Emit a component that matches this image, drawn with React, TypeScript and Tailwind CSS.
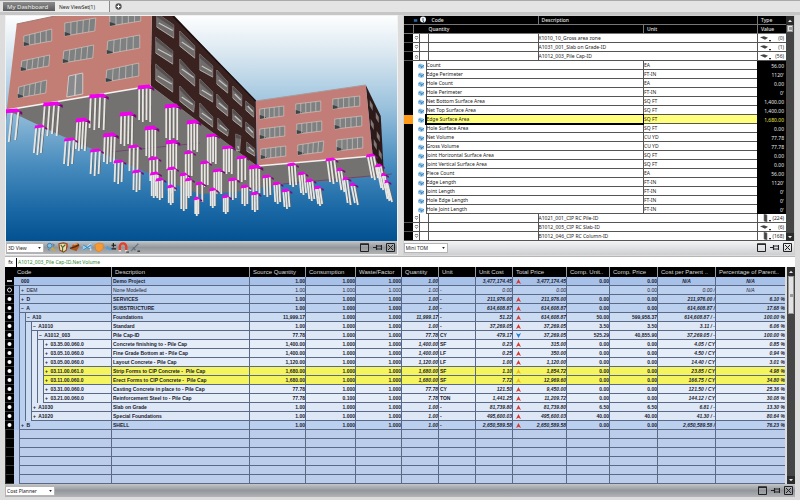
import { useState } from 'react';
import type { ReactNode } from 'react';
import clsx from 'clsx';

type Quad = [number, number, number, number, number, number, number, number];

// top-left, top-right, bottom-right, bottom-left
const FRONT_WINDOWS: Quad[] = [
    [24, 36, 52, 29, 52, 41, 24, 46],
    [65, 23, 96, 18, 95, 31, 65, 36],
    [110, 13, 141, 9, 141, 21, 110, 26],
    [22, 61, 50, 55, 49, 66, 21, 71],
    [64, 51, 94, 45, 93, 58, 63, 63],
    [108, 41, 140, 35, 140, 48, 107, 54],
    [19, 87, 47, 80, 46, 93, 18, 98],
    [107, 70, 139, 63, 139, 76, 106, 82],
    [260, 109, 284, 106, 284, 116, 260, 119],
    [296, 104, 321, 101, 321, 111, 296, 114],
    [333, 99, 360, 96, 360, 106, 333, 109],
    [260, 129, 285, 126, 285, 136, 260, 139],
    [297, 124, 322, 121, 322, 131, 297, 134],
    [335, 119, 362, 116, 362, 126, 335, 129],
    [261, 149, 286, 146, 286, 156, 261, 159],
    [298, 145, 324, 141, 323, 152, 298, 155],
    [337, 140, 363, 137, 363, 148, 337, 151],
];

const SIDE_WINDOWS: Quad[] = [
    [157, 13, 174, 25, 174, 38, 157, 27],
    [156, 37, 173, 51, 173, 64, 156, 53],
    [156, 64, 173, 79, 173, 92, 156, 80],
    [180, 31, 195, 46, 195, 58, 180, 46],
    [180, 59, 195, 75, 195, 86, 180, 73],
    [180, 86, 195, 102, 194, 112, 180, 101],
    [200, 54, 213, 66, 213, 77, 200, 70],
    [200, 79, 213, 92, 213, 102, 200, 94],
    [200, 103, 213, 117, 213, 127, 200, 117],
    [217, 70, 228, 82, 228, 93, 217, 84],
    [217, 94, 228, 106, 228, 116, 217, 107],
    [218, 118, 229, 130, 228, 136, 218, 129],
    [233, 86, 242, 95, 242, 106, 233, 98],
    [233, 109, 242, 118, 242, 127, 233, 120],
    [236, 134, 241, 136, 240, 151, 236, 150],
    [246, 101, 254, 108, 254, 117, 246, 110],
    [246, 122, 254, 129, 254, 138, 246, 131],
    [247, 142, 255, 149, 255, 156, 247, 151],
];

// centre x, top, cap width, pile length, pile count
const PILES: number[][] = [
    [12, 109, 17, 32, 3], [52, 102, 18, 33, 4], [98, 94, 18, 35, 4], [145, 85, 15, 36, 4],
    [40, 125, 11, 30, 3], [82, 118, 13, 32, 4], [127, 112, 15, 33, 4], [172, 104, 15, 35, 4],
    [70, 138, 12, 28, 3], [110, 133, 14, 30, 4], [151, 126, 13, 31, 4], [193, 120, 13, 31, 4],
    [96, 149, 12, 27, 3], [134, 145, 12, 28, 3], [172, 140, 13, 30, 4], [212, 134, 12, 30, 4],
    [119, 160, 11, 24, 3], [154, 157, 11, 26, 3], [189, 151, 10, 27, 3], [228, 146, 12, 28, 4],
    [137, 170, 10, 22, 3], [155, 172, 10, 26, 4], [172, 167, 10, 26, 3], [205, 161, 10, 26, 3],
    [242, 156, 11, 26, 3], [255, 165, 13, 27, 4], [218, 169, 11, 25, 4], [184, 173, 9, 38, 3],
    [233, 178, 10, 22, 3], [160, 178, 9, 22, 3], [171, 185, 8, 20, 3], [245, 185, 9, 21, 3],
    [200, 182, 9, 20, 2], [255, 192, 9, 20, 3], [213, 188, 8, 20, 3], [226, 195, 8, 19, 3],
    [189, 178, 8, 20, 3], [197, 197, 7, 19, 3], [267, 175, 10, 22, 3], [277, 182, 9, 22, 3],
    [286, 189, 9, 20, 3], [292, 163, 10, 24, 3], [302, 172, 9, 23, 3], [310, 179, 9, 22, 3],
    [318, 186, 8, 20, 3], [331, 158, 11, 26, 3], [340, 168, 7, 24, 2], [346, 177, 7, 28, 2],
    [353, 183, 7, 22, 2], [371, 154, 10, 26, 3], [379, 164, 8, 26, 3], [384, 173, 6, 28, 2],
    [387, 180, 5, 22, 2],
];

const points = (q: number[]) => q.join(' ');

const FrontWindow = ({ q }: { q: Quad }) => {
    const [x1, y1, x2, y2, x3, y3, x4, y4] = q;
    const panes = [0.2, 0.4, 0.6, 0.8];
    return (
        <g stroke="#c9bdb8" strokeWidth="0.8">
            <polygon points={points(q)} fill="#7d8181" />
            <path d={`M${x4} ${y4 - 4}L${x4 + 6} ${y4 - 2}V${y4 - 1}L${x4} ${y4}Z`} fill="#3c4446" stroke="none" />
            {panes.map(t => (
                <line key={t} x1={x1 + (x2 - x1) * t} y1={y1 + (y2 - y1) * t} x2={x4 + (x3 - x4) * t} y2={y4 + (y3 - y4) * t} />
            ))}
        </g>
    );
};

const SideWindow = ({ q }: { q: Quad }) => {
    const [x1, y1, x2, y2, x3, y3, x4, y4] = q;
    return (
        <g>
            <polygon points={points(q)} fill="#6f6c6b" stroke="#a39c98" strokeWidth="0.6" />
            <path d={`M${x1} ${y1}L${x2} ${y2}V${y2 + 3}L${x1} ${y1 + 4}Z`} fill="#55504f" />
            <line x1={x4 + 2} y1={y4 - 4} x2={x3 - 1} y2={(y3 + y4) / 2 - 2} stroke="#c6c4c2" strokeWidth="1.2" />
            <line x1={x4} y1={y4} x2={x3} y2={y3} stroke="#b5aeaa" strokeWidth="0.8" />
        </g>
    );
};

const Pile = ({ pile }: { pile: number[] }) => {
    const [cx, top, w, len, count] = pile;
    const lean = cx < 150 ? (cx - 150) * 0.022 : Math.max(0, cx - 250) * 0.035;
    const h = w > 12 ? 3 : 2;
    const step = (w - 4) / (count - 1);
    return (
        <g>
            <path d={`M${cx + w / 2 - 5} ${top}L${cx + w / 2 + 2} ${top + 3}V${top + h + 3}L${cx + w / 2 - 3} ${top + h}Z`} fill="#7a0878" />
            {Array.from({ length: count }, (_, i) => {
                const x = cx - w / 2 + 2 + i * step;
                const y = top + h + (i % 2);
                const end = top + h + len - 4 + (i % 2 ? 2 : 0);
                return (
                    <g key={i}>
                        <line x1={x + 1.2} y1={y} x2={x + 1.2 + lean} y2={end} stroke="#68645f" strokeWidth="0.9" />
                        <line x1={x} y1={y} x2={x + lean} y2={end} stroke="#e9e7e3" strokeWidth="1.8" />
                    </g>
                );
            })}
            <polygon
                points={points([cx - w / 2 + 1, top + 0.5, cx + w / 2 - 3, top - 0.5, cx + w / 2, top + h, cx - w / 2, top + h + 1.5])}
                fill="#f000ec"
            />
        </g>
    );
};

const BuildingScene = () => (
    <svg className="block w-full flex-1" viewBox="6 16 391 225" preserveAspectRatio="xMidYMid slice" role="img" aria-label="3D model view">
        <defs>
            <linearGradient id="sky" x1="0" y1="0" x2="0" y2="1">
                <stop offset="0" stopColor="#fdfefe" />
                <stop offset="0.16" stopColor="#dbe8f1" />
                <stop offset="0.4" stopColor="#9bc2dd" />
                <stop offset="0.65" stopColor="#4b8ebf" />
                <stop offset="0.85" stopColor="#1b69a6" />
                <stop offset="1" stopColor="#02508f" />
            </linearGradient>
        </defs>
        <rect x="-400" y="16" width="1200" height="226" fill="url(#sky)" />
        <polygon points="7,110 151,85 258,166 373,155 388,175 330,181 283,184 235,192 200,194 160,178 60,135" fill="#747270" />
        <path d="M110 152L200 143M283 184L392 174" stroke="#6c3b70" strokeWidth="0.8" />
        <polygon points="366,85 381,116 384,172 373,156" fill="#2c1a1a" />
        <g fill="#7e7876">
            <path d="M370 100l3 5v6l-3-5zM376 112l3 5v6l-3-5zM371 119l3 5v6l-3-5zM377 131l3 5v6l-3-5zM374 139l3 5v6l-3-5zM379 149l3 5v6l-3-5z" />
        </g>
        <polygon points="256,101 366,85 373,156 258,166" fill="#c27d78" />
        <path d="M256 101L366 85" stroke="#a79c9b" strokeWidth="1" />
        <path d="M258 166L373 156" stroke="#f3f1ee" strokeWidth="1.4" />
        <polygon points="152,10 169,10 256,101 257,166 151,86" fill="#3a2220" />
        <path d="M173 16L256 101" stroke="#1a1010" strokeWidth="1.4" />
        <path d="M151 86L257 166" stroke="#8c8784" strokeWidth="0.8" />
        <polygon points="17,24 60,15 152,10 151,86 7,110" fill="#c27d75" />
        <path d="M17 24L60 15" stroke="#a27a75" />
        <path d="M7 110L151 86" stroke="#f6f4f1" strokeWidth="1.6" />
        {FRONT_WINDOWS.map(q => <FrontWindow key={q.join()} q={q} />)}
        <path d="M69 76L83 73V94L67 97Z" fill="#878a8c" stroke="#d2c8c4" />
        <path d="M76 75L75 96" stroke="#d2c8c4" strokeWidth="1.4" />
        {SIDE_WINDOWS.map(q => <SideWindow key={q.join()} q={q} />)}
        {PILES.map(p => <Pile key={p.join()} pile={p} />)}
    </svg>
);

const ArrowDot = ({ up }: { up?: boolean }) => (
    <svg viewBox="0 0 6 6" className="size-1 shrink-0">
        <path d={up ? 'M0 4.5L3 1l3 3.5z' : 'M0 1.5L3 5l3-3.5z'} fill="#e8e8e8" />
    </svg>
);

const Scrollbar = ({ long }: { long?: boolean }) => (
    <div aria-hidden="true" className="flex w-[8px] shrink-0 flex-col items-center bg-[#454545]">
        <div className="flex h-[9px] w-full items-center justify-center bg-[#2b2b2b]"><ArrowDot up /></div>
        <div className={clsx('flex w-[6px] items-center justify-center border border-[#999] bg-[#e2e2e2]', long ? 'h-[38px]' : 'h-[7px]')}>
            <span className="h-[3px] w-[3px] bg-[#9a9a9a]" />
        </div>
        <div className="flex-1" />
        <div className="flex h-[8px] w-full items-center justify-center bg-[#2b2b2b]"><ArrowDot /></div>
    </div>
);

const WindowButtons = () => (
    <div className="ml-auto flex items-center gap-[4px] pr-[2px]">
        <button aria-label="Maximize">
            <svg viewBox="0 0 9 9" className="block size-[9px]"><path d="M.5 1h8v7.500h-8z" fill="none" stroke="#222" /><path d="M0 1.200h9" stroke="#222" strokeWidth="1.400" /></svg>
        </button>
        <button aria-label="Pin">
            <svg viewBox="0 0 9 9" className="block size-[9px]"><path d="M0 4.500h3M3.500 2v5M8.500 2v5" stroke="#222" /><path d="M3.500 3h5v3h-5z" fill="none" stroke="#222" strokeWidth="1.200" /></svg>
        </button>
        <button aria-label="Close">
            <svg viewBox="0 0 9 9" className="block size-[9px]"><path d="M.5.5h8v8h-8zM2 2l5 5M7 2L2 7" fill="none" stroke="#222" /></svg>
        </button>
    </div>
);

const ViewSelect = ({ label, width, light, children }: { label: string; width: string; light?: boolean; children?: ReactNode }) => (
    <div className={clsx('flex h-[13px] shrink-0 items-center', light ? 'bg-linear-to-b from-[#f4f5f6] to-[#cfd1d4]' : 'bg-linear-to-b from-[#c4c6c8] via-[#93979b] to-[#b2b4b6]')}>
        <div className={clsx('relative flex h-[10px] items-center border border-[#b5b5b5] bg-white', width)}>
            <select aria-label="Panel view" className="h-full w-full appearance-none bg-transparent pl-px text-[5px] leading-[8px] text-[#222] outline-none">
                <option>{label}</option>
            </select>
            <svg viewBox="0 0 4 3" className="pointer-events-none absolute right-[2px] h-[2px] w-[3px]"><path d="M0 0h4L2 3z" fill="#222" /></svg>
        </div>
        {children}
        <WindowButtons />
    </div>
);

const TOOL_ICONS: { name: string; art: ReactNode }[] = [
    { name: 'Zoom', art: <><circle cx="4" cy="4" r="2.600" fill="#7fc0ea" stroke="#3a77ad" /><path d="M6 6l4 4" stroke="#c7a93e" strokeWidth="2" /><path d="M7 2l2 1-1 2M2 8l2 1" stroke="#3f78a5" fill="none" /></> },
    { name: 'Shade', art: <><path d="M1 2l5-1 4 1-1 7-3 2-4-2z" fill="#f5d9a6" stroke="#8b4a22" strokeWidth="1.200" /><path d="M3 3l2 3 3-3M5 6v4" stroke="#3c6a33" strokeWidth="1.200" fill="none" /><path d="M8 2l2 1v3" stroke="#d23c2a" fill="none" /></> },
    { name: 'Orbit', art: <><path d="M1 8l2-5 6-2 1 4-3 5z" fill="#b1561d" /><path d="M0 7l6-2 4-2" stroke="#4d2a17" strokeWidth="1.600" fill="none" /><path d="M4 3l4-1" stroke="#eb9a4e" strokeWidth="1.400" /></> },
    { name: 'Section', art: <><path d="M1 3l4 3-4 3M10 2L6 5l4 4" fill="#8fd0f4" stroke="#dff3fd" strokeWidth="1.600" /><path d="M1 3l8 5M1 9l9-6" stroke="#3d8fc7" strokeWidth="1.200" /></> },
    { name: 'Select', art: <path d="M1 3l4-2 5 1v5l-4 4-4-2z" fill="#f79a35" stroke="#d77a1c" strokeWidth="0.600" /> },
    { name: 'Offset', art: <><path d="M0 7h6M1 5l4 4" stroke="#4aa2da" strokeWidth="1.600" /><path d="M8 1v5M6 3.500h5M6 7.500h5" stroke="#1b1b1b" strokeWidth="1.200" /></> },
    { name: 'Snap', art: <><path d="M2 9V5a3.500 3.500 0 017 0v4" fill="none" stroke="#e6402a" strokeWidth="2.600" /><path d="M.700 9.500h2.600M7.700 9.500h2.600" stroke="#f2d5cd" strokeWidth="1.600" /><path d="M9 11h3" stroke="#222" /></> },
    { name: 'Measure', art: <><path d="M1 10l8-8M3 6l3 3" stroke="#5c6f80" strokeWidth="1.200" /><path d="M1 8l2 2M8 1l2 2" stroke="#7696b0" /><path d="M8 10h3" stroke="#222" strokeWidth="1.200" /></> },
];

type Takeoff = { name: string; unit?: string; value: string; kind: 'down' | 'up' | 'item'; tall?: boolean };

const item = (name: string, unit: string, value: string): Takeoff => ({ name, unit, value, kind: 'item' });

const TAKEOFFS: Takeoff[] = [
    { name: 'X1010_10_Gross area zone', value: '(0)', kind: 'down' },
    { name: 'A1031_001_Slab on Grade-ID', value: '(1)', kind: 'down' },
    { name: 'A1012_003_Pile Cap-ID', value: '(56)', kind: 'up' },
    item('Count', 'EA', '56.00'),
    item('Edge Perimeter', 'FT-IN', "1120'"),
    item('Hole Count', 'EA', '0.00'),
    item('Hole Perimeter', 'FT-IN', "0'"),
    item('Net Bottom Surface Area', 'SQ FT', '1,400.00'),
    item('Net Top Surface Area', 'SQ FT', '1,400.00'),
    item('Edge Surface Area', 'SQ FT', '1,680.00'),
    item('Hole Surface Area', 'SQ FT', '0.00'),
    item('Net Volume', 'CU YD', '77.78'),
    item('Gross Volume', 'CU YD', '77.78'),
    item('Joint Horizontal Surface Area', 'SQ FT', '0.00'),
    item('Joint Vertical Surface Area', 'SQ FT', '0.00'),
    item('Piece Count', 'EA', '56.00'),
    item('Edge Length', 'FT-IN', "1120'"),
    item('Joint Length', 'FT-IN', "0'"),
    item('Hole Edge Length', 'FT-IN', "0'"),
    item('Hole Joint Length', 'FT-IN', "0'"),
    { name: 'A1021_001_CIP RC Pile-ID', value: '(224)', kind: 'down', tall: true },
    { name: 'B1012_005_CIP RC Slab-ID', value: '(6)', kind: 'down' },
    { name: 'B1012_046_CIP RC Column-ID', value: '(168)', kind: 'down', tall: true },
];

const TypeIcon = ({ tall }: { tall?: boolean }) => (
    <svg viewBox="0 0 12 8" className="h-[8px] w-[12px]">
        {tall ? (
            <path d="M4 0l3 1v7l-3-1z" fill="#444" stroke="#777" strokeWidth="0.600" />
        ) : (
            <path d="M0 3.200l4-1 4 1.500-3 2z" fill="#444" />
        )}
        <path d="M9 6h2v1.200H9z" fill="#333" />
    </svg>
);

const TakeoffTable = ({ selected, onSelect }: { selected: string; onSelect: (name: string) => void }) => (
    <table className="min-w-0 flex-1 table-fixed border-separate border-spacing-0 bg-white text-left text-[5px] leading-[8px] whitespace-nowrap text-[#222]">
        <colgroup>
            <col className="w-[9px]" /><col className="w-[6px]" /><col className="w-[7px]" /><col className="w-[3px]" />
            <col className="w-[109px]" /><col /><col className="w-[114px]" /><col className="w-[29px]" />
        </colgroup>
        <thead className="bg-black text-[#e4e4e4]">
            <tr className="h-[9px] *:border-b *:border-[#777] *:p-0 *:font-medium">
                <th />
                <th><svg viewBox="0 0 7 7" className="h-[7px] w-[6px]"><path d="M1 2h4v3H1z" fill="#2a6aa8" /></svg></th>
                <th colSpan={2}><svg viewBox="0 0 8 8" className="block h-[8px] w-[8px]"><circle cx="4" cy="3.500" r="3" fill="#eef2f6" /><path d="M4 2v3l2 2" stroke="#3f5064" fill="none" /></svg></th>
                <th><span className="pl-[3px]">Code</span></th>
                <th colSpan={2} className="border-l"><span className="pl-[3px]">Description</span></th>
                <th className="border-l"><span className="pl-[3px]">Type</span></th>
            </tr>
            <tr className="h-[9px] *:border-b *:border-[#777] *:p-0 *:font-medium">
                <th /><th colSpan={2} className="border-l" />
                <th colSpan={3}><span className="pl-[3px]">Quantity</span></th>
                <th className="border-l"><span className="pl-[3px]">Unit</span></th>
                <th className="border-l"><span className="pl-[3px]">Value</span></th>
            </tr>
        </thead>
        <tbody>
            {TAKEOFFS.map(t => {
                if (t.kind !== 'item') {
                    return (
                        <tr key={t.name} className="h-[9px] *:border-b *:border-[#555] *:p-0">
                            <td className="bg-black" />
                            <td><svg viewBox="0 0 6 8" className="block h-[8px] w-[6px]"><path d={t.kind === 'up' ? 'M2 5l1.500-2L5 5M2 6h3' : 'M2 3.500l1.500 2 1.500-2M2 2.500h3'} stroke="#555" strokeWidth="0.700" fill="none" /></svg></td>
                            <td colSpan={2} className="border-x" />
                            <td />
                            <td colSpan={2} className="border-l">{t.name}</td>
                            <td className="border-l">
                                <div className="flex items-center justify-between pr-[2px] pl-[2px]"><TypeIcon tall={t.tall} />{t.value}</div>
                            </td>
                        </tr>
                    );
                }
                const active = t.name === selected;
                return (
                    <tr key={t.name} className="h-[9px] *:p-0" onClick={() => onSelect(t.name)}>
                        <td className={active ? 'bg-[#ff9a16]' : 'bg-black'} />
                        <td colSpan={2}>
                            <svg viewBox="0 0 13 8" className="block h-[8px] w-[13px]"><path d="M5 3l2-1.500L11 3v3L8 7 5 5.500z" fill="#8cc0e6" /><path d="M6 3l3 2M8 6l3-3" stroke="#3b7cb3" strokeWidth="0.800" /></svg>
                        </td>
                        <td colSpan={3} className={clsx('border-b border-l', active ? 'border-black bg-[#ffff7c] outline outline-black' : 'border-[#555]')}>{t.name}</td>
                        <td className={clsx('border-b border-l border-[#555]', active && 'bg-[#ffff7c]')}>{t.unit}</td>
                        <td className={clsx('bg-black pr-[2px]! text-right', active ? 'text-[#e9e94a]' : 'text-[#e6e6e6]')}>{t.value}</td>
                    </tr>
                );
            })}
        </tbody>
    </table>
);

type Mark = 'up' | 'down' | '';
// level, open, code, description, source, consumption, waste, quantity, unit, unit cost, mark, total, comp unit, comp price, per parent, percentage
type CostRow = [number, string, string, string, string, string, string, string, string, string, Mark, string, string, string, string, string];

const COST_ROWS: CostRow[] = [
    [0, '', '000', 'Demo Project', '1.00', '1.000', '1.000', '1.00', '', '3,477,174.45', 'up', '3,477,174.45', '0.00', '0.00', 'N/A', 'N/A'],
    [1, '+', 'DEM', 'None Modelled', '1.00', '1.000', '1.000', '1.00', '-', '0.00', '', '0.00', '', '0.00', '0.00 /', 'N/A'],
    [1, '+', 'D', 'SERVICES', '1.00', '1.000', '1.000', '1.00', '-', '211,976.00', 'up', '211,976.00', '0.00', '0.00', '211,976.00 /', '6.10 %'],
    [1, '−', 'A', 'SUBSTRUCTURE', '1.00', '1.000', '1.000', '1.00', '-', '614,608.87', 'up', '614,608.87', '0.00', '0.00', '614,608.87 /', '17.68 %'],
    [2, '−', 'A10', 'Foundations', '11,999.17', '1.000', '1.000', '11,999.17', '-', '51.22', 'up', '614,608.87', '50.00', '599,958.37', '614,608.87 / -', '100.00 %'],
    [3, '−', 'A1010', 'Standard', '1.00', '1.000', '1.000', '1.00', '-', '37,269.05', 'up', '37,269.05', '3.50', '3.50', '3.11 / -', '6.06 %'],
    [4, '−', 'A1012_003', 'Pile Cap-ID', '77.78', '1.000', '1.000', '77.78', 'CY', '479.17', 'down', '37,269.05', '525.29', '40,855.90', '37,269.05 / -', '100.00 %'],
    [5, '+', '03.35.00.060.0', 'Concrete finishing to - Pile Cap', '1,400.00', '1.000', '1.000', '1,400.00', 'SF', '0.23', 'up', '315.00', '0.00', '0.00', '4.05 / CY', '0.85 %'],
    [5, '+', '03.05.10.060.0', 'Fine Grade Bottom at - Pile Cap', '1,400.00', '1.000', '1.000', '1,400.00', 'LF', '0.25', 'up', '350.00', '0.00', '0.00', '4.50 / CY', '0.94 %'],
    [5, '+', '03.05.00.060.0', 'Layout Concrete - Pile Cap', '1,120.00', '1.000', '1.000', '1,120.00', 'LF', '1.00', 'up', '1,120.00', '0.00', '0.00', '14.40 / CY', '3.01 %'],
    [5, '+', '03.11.00.061.0', 'Strip Forms to CIP Concrete -  Pile Cap', '1,680.00', '1.000', '1.000', '1,680.00', 'SF', '1.10', 'up', '1,854.72', '0.00', '0.00', '23.85 / CY', '4.98 %'],
    [5, '+', '03.11.00.060.0', 'Erect Forms to CIP Concrete -  Pile Cap', '1,680.00', '1.000', '1.000', '1,680.00', 'SF', '7.72', 'up', '12,969.60', '0.00', '0.00', '166.75 / CY', '34.80 %'],
    [5, '+', '03.31.00.060.0', 'Casting Concrete in place to - Pile Cap', '77.78', '1.000', '1.000', '77.78', 'CY', '121.50', 'up', '9,450.00', '0.00', '0.00', '121.50 / CY', '25.36 %'],
    [5, '+', '03.21.00.060.0', 'Reinforcement Steel to - Pile Cap', '77.78', '0.100', '1.000', '7.78', 'TON', '1,441.25', 'up', '11,209.72', '0.00', '0.00', '144.12 / CY', '30.08 %'],
    [3, '+', 'A1030', 'Slab on Grade', '1.00', '1.000', '1.000', '1.00', '-', '81,739.80', 'up', '81,739.80', '6.50', '6.50', '6.81 / -', '13.30 %'],
    [3, '+', 'A1020', 'Special Foundations', '1.00', '1.000', '1.000', '1.00', '-', '495,600.03', 'up', '495,600.03', '40.00', '40.00', '41.30 / -', '80.64 %'],
    [1, '+', 'B', 'SHELL', '1.00', '1.000', '1.000', '1.00', '-', '2,650,589.58', 'up', '2,650,589.58', '0.00', '0.00', '2,650,589.58 /', '76.23 %'],
];

const LEVEL_BG = ['bg-[#a8c1e9]', 'bg-[#bbcfee]', 'bg-[#cbdcf2]', 'bg-[#dde7f5]', 'bg-[#dde7f5]', 'bg-[#e5edf9]'];
const HEADERS = ['Code', 'Description', 'Source Quantity', 'Consumption', 'Waste/Factor', 'Quantity', 'Unit', 'Unit Cost', 'Total Price', 'Comp. Unit..', 'Comp. Price', 'Cost per Parent ..', 'Percentage of Parent..'];

const Marker = ({ mark, muted }: { mark: Mark; muted: boolean }) => {
    if (!mark) return <span />;
    return (
        <svg viewBox="0 0 6 6" className="size-[5px]">
            <path d={mark === 'up' ? 'M0 6L3 0l3 6-3-1.500z' : 'M0 0l3 1.500L6 0 3 6z'} fill={mark === 'down' ? '#1d7fd0' : muted ? '#efb52a' : '#d8372f'} />
        </svg>
    );
};

const CostTable = () => (
    <table className="min-w-0 flex-1 table-fixed border-separate border-spacing-0 bg-[#bccdec] font-['Liberation_Sans',Arial,sans-serif] text-[5px] leading-[8px] whitespace-pre text-[#1b2230]">
        <colgroup>
            <col className="w-[9px]" /><col className="w-[97px]" /><col /><col className="w-[56px]" /><col className="w-[50px]" />
            <col className="w-[46px]" /><col className="w-[37px]" /><col className="w-[37px]" /><col className="w-[37px]" /><col className="w-[54px]" />
            <col className="w-[43px]" /><col className="w-[48px]" /><col className="w-[58px]" /><col className="w-[70px]" />
        </colgroup>
        <thead className="bg-black text-[6px] text-[#d9d9d9]">
            <tr className="h-[10px]">
                <th />
                {HEADERS.map((h, i) => (
                    <th key={h} scope="col" className={clsx('p-0 pl-[3px] text-left font-normal', i > 0 && 'border-l border-[#999]')}>{h}</th>
                ))}
            </tr>
        </thead>
        <tbody>
            {COST_ROWS.map((row, index) => {
                const [level, open, code, desc, source, consumption, waste, quantity, unit, unitCost, mark, total, compUnit, compPrice, perParent, percent] = row;
                const marked = code.startsWith('03.11');
                const bg = marked ? 'bg-[#f4f45e]' : LEVEL_BG[level];
                return (
                    <tr key={code} className={clsx('h-[9px] *:border-b *:border-[#5a6a86] *:p-0', bg, index !== 1 && 'font-bold')}>
                        <td className="border-[#333]! bg-black">
                            <svg viewBox="0 0 9 8" className="block h-[8px] w-[9px]">
                                {index === 0 && <path d="M2 4h5" stroke="#fff" strokeWidth="1.600" />}
                                {index === 1 && <circle cx="4.500" cy="4" r="2" fill="none" stroke="#ddd" />}
                                {index > 1 && <circle cx="4.500" cy="4" r="2" fill="#fff" />}
                            </svg>
                        </td>
                        <td className="border-b-0!">
                            <div className="flex h-[9px]">
                                {LEVEL_BG.slice(0, level).map((c, i) => (
                                    <span key={i} className={clsx('w-[6px] shrink-0 border-r border-[#5a6a86]', c)} />
                                ))}
                                <span className="flex-1 border-b border-[#5a6a86]">
                                    {level > 0 ? <button className="w-[5px] text-center align-top leading-[8px]" aria-label={`Toggle ${code}`}>{open}</button> : <span className="pl-[7px]" />}
                                    {level > 0 && ' '}{code}
                                </span>
                            </div>
                        </td>
                        <td className="border-l pl-px!">{desc}</td>
                        <td className="border-l text-right">{source}</td>
                        <td className="border-l text-right">{consumption}</td>
                        <td className="border-l text-right">{waste}</td>
                        <td className="border-l text-right italic">{quantity}</td>
                        <td className="border-l pl-px!">{unit}</td>
                        <td className="border-l text-right italic">{unitCost}</td>
                        <td className="border-l">
                            <div className="flex items-center justify-between pl-[3px] italic"><Marker mark={mark} muted={marked} />{total}</div>
                        </td>
                        <td className="border-l text-right">{compUnit}</td>
                        <td className="border-l text-right">{compPrice}</td>
                        <td className={clsx('border-l italic', perParent === 'N/A' ? 'text-center' : 'text-right')}>{perParent}</td>
                        <td className={clsx('border-l italic', percent === 'N/A' ? 'text-center' : 'text-right')}>{percent}</td>
                    </tr>
                );
            })}
            {Array.from({ length: 6 }, (_, i) => (
                <tr key={i} className="h-[9px] *:border-b *:border-l *:border-[#5a6a86] *:p-0">
                    <td className="border-[#333]! bg-black" />
                    <td className="border-0!"><div className="ml-[5px] h-[9px] border-b border-l border-[#5a6a86]" /></td>
                    {HEADERS.slice(1).map(h => <td key={h} />)}
                </tr>
            ))}
        </tbody>
    </table>
);

const App = () => {
    const [selected, setSelected] = useState('Edge Surface Area');
    const [formula, setFormula] = useState('A1012_003_Pile Cap-ID.Net Volume');

    return (
        <div className="flex min-h-screen flex-col border-t border-[#aaa] bg-[#dcdcdc] font-['Noto_Sans',sans-serif] text-[5px] text-[#222]">
            {/* View set tabs */}
            <nav className="flex h-[14px] items-stretch border-b-[3px] border-[#c6c6c6] bg-[#e4e4e4] pl-[3px]">
                <button className="my-px w-[52px] bg-linear-to-b from-[#8c8c8c] to-[#5a5a5a] pl-[4px] text-left text-[6px] leading-[8px] text-[#eee]">My Dashboard</button>
                <button className="w-[55px] border-r border-[#8a8a8a] bg-[#ececec] pl-[4px] text-left text-[5px] leading-[10px]">New ViewSet(1)</button>
                <button aria-label="Add view set" className="ml-[5px]">
                    <svg viewBox="0 0 8 8" className="block size-[7px]"><circle cx="4" cy="4" r="3.600" fill="#555" /><path d="M4 2v4M2 4h4" stroke="#fff" strokeWidth="1.200" /></svg>
                </button>
            </nav>

            <div className="flex gap-[5px] pr-[5px] pl-[5px]">
                <section className="flex min-w-0 flex-1 flex-col border border-[#f2f2f2]">
                    <BuildingScene />
                    <ViewSelect label="3D View" width="w-[38px]">
                        <div className="ml-[2px] flex">
                            {TOOL_ICONS.map(icon => (
                                <button key={icon.name} aria-label={icon.name} className="w-[12px]">
                                    <svg viewBox="0 0 12 12" className="block size-[11px]">{icon.art}</svg>
                                </button>
                            ))}
                        </div>
                    </ViewSelect>
                </section>
                <section className="flex min-w-0 flex-1 flex-col border border-[#d0d0d0]">
                    <div className="flex">
                        <TakeoffTable selected={selected} onSelect={setSelected} />
                        <Scrollbar />
                    </div>
                    <ViewSelect label="Mini TOM" width="w-[44px]" light />
                </section>
            </div>

            <section className="mx-[5px] mt-px flex flex-1 flex-col border-t border-[#b5b5b5]">
                <div className="flex h-[10px] items-center bg-white">
                    <label htmlFor="formula" className="w-[12px] border-r border-black text-center leading-[9px] font-medium">fx</label>
                    <input
                        id="formula"
                        value={formula}
                        onChange={e => setFormula(e.target.value)}
                        className="h-[9px] flex-1 pl-px text-[5px] text-[#2f8a35] outline-none"
                    />
                </div>
                <div className="flex">
                    <CostTable />
                    <div className="flex bg-[#dcdcdc] pl-[2px]"><Scrollbar long /></div>
                </div>
                <ViewSelect label="Cost Planner" width="w-[50px]" />
            </section>
        </div>
    );
};

export default App;
